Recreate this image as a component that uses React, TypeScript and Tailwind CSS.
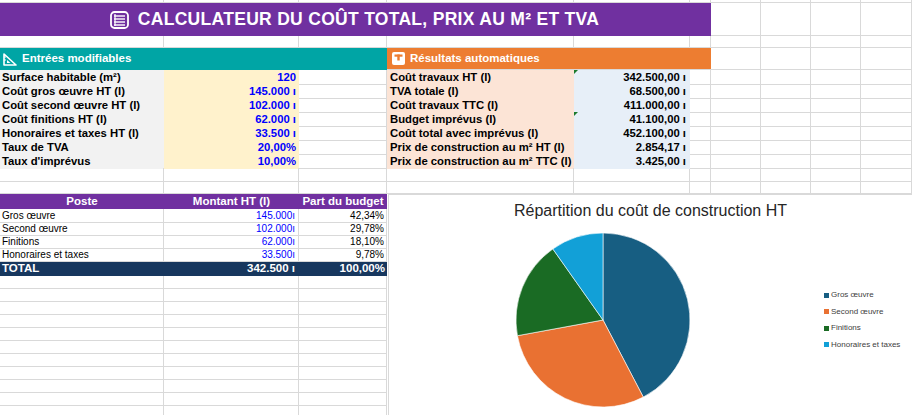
import React from "react";

const COLS =
  "grid grid-cols-[164px_135px_88px_187px_116px_21px_50px_50px_50px_51px]";
const CELL = "border-r border-b border-[#d9d9d9]";

const inputs = [
  ["Surface habitable (m²)", "120"],
  ["Coût gros œuvre HT (I)", "145.000 ı"],
  ["Coût second œuvre HT (I)", "102.000 ı"],
  ["Coût finitions HT (I)", "62.000 ı"],
  ["Honoraires et taxes HT (I)", "33.500 ı"],
  ["Taux de TVA", "20,00%"],
  ["Taux d'imprévus", "10,00%"],
];

const results = [
  ["Coût travaux HT (I)", "342.500,00 ı", true],
  ["TVA totale (I)", "68.500,00 ı", false],
  ["Coût travaux TTC (I)", "411.000,00 ı", false],
  ["Budget imprévus (I)", "41.100,00 ı", true],
  ["Coût total avec imprévus (I)", "452.100,00 ı", false],
  ["Prix de construction au m² HT (I)", "2.854,17 ı", false],
  ["Prix de construction au m² TTC (I)", "3.425,00 ı", false],
];

const postes = [
  { name: "Gros œuvre", value: 145000, label: "145.000ı", pct: "42,34%", color: "#175e82" },
  { name: "Second œuvre", value: 102000, label: "102.000ı", pct: "29,78%", color: "#e97132" },
  { name: "Finitions", value: 62000, label: "62.000ı", pct: "18,10%", color: "#1a6b24" },
  { name: "Honoraires et taxes", value: 33500, label: "33.500ı", pct: "9,78%", color: "#12a0d7" },
];

const EmptyCells = ({ n }: { n: number }) => (
  <>
    {Array.from({ length: n }).map((_, i) => (
      <div key={i} className={CELL} />
    ))}
  </>
);

const LedgerIcon = () => (
  <svg width="19" height="18" viewBox="0 0 19 18">
    <rect x="1" y="1" width="17" height="16" rx="3.5" fill="none" stroke="white" strokeWidth="1.8" />
    <line x1="5" y1="3" x2="5" y2="15" stroke="white" strokeWidth="1.2" />
    <line x1="4" y1="5" x2="15" y2="5" stroke="white" strokeWidth="1.4" />
    <line x1="4" y1="8" x2="15" y2="8" stroke="white" strokeWidth="1.4" />
    <line x1="4" y1="11" x2="15" y2="11" stroke="white" strokeWidth="1.4" />
    <line x1="4" y1="14" x2="15" y2="14" stroke="white" strokeWidth="1.4" />
  </svg>
);

const RulerIcon = () => (
  <svg width="14" height="13" viewBox="0 0 14 13">
    <path d="M1 1 L13 12 L1 12 Z" fill="none" stroke="white" strokeWidth="1.6" strokeLinejoin="round" />
    <path d="M4 7 L7.5 10 L4 10 Z" fill="white" />
    <line x1="1" y1="4" x2="3" y2="4" stroke="white" strokeWidth="1" />
    <line x1="1" y1="7" x2="3" y2="7" stroke="white" strokeWidth="1" />
  </svg>
);

const BoxIcon = () => (
  <svg width="13" height="13" viewBox="0 0 13 13">
    <rect x="0" y="0" width="13" height="13" rx="2" fill="white" />
    <rect x="2.5" y="2.5" width="8" height="2.2" fill="#ed7d31" />
    <rect x="5.3" y="2.5" width="2.4" height="6" fill="#ed7d31" />
  </svg>
);

const Pie = () => {
  const r = 87;
  const c = 88;
  const total = postes.reduce((s, p) => s + p.value, 0);
  let acc = 0;
  return (
    <svg width="176" height="176" viewBox="0 0 176 176">
      {postes.map((p) => {
        const a0 = (acc / total) * Math.PI * 2;
        acc += p.value;
        const a1 = (acc / total) * Math.PI * 2;
        const x0 = c + r * Math.sin(a0);
        const y0 = c - r * Math.cos(a0);
        const x1 = c + r * Math.sin(a1);
        const y1 = c - r * Math.cos(a1);
        const large = a1 - a0 > Math.PI ? 1 : 0;
        return (
          <path
            key={p.name}
            d={`M${c} ${c} L${x0} ${y0} A${r} ${r} 0 ${large} 1 ${x1} ${y1} Z`}
            fill={p.color}
            stroke="white"
            strokeWidth="0.6"
          />
        );
      })}
    </svg>
  );
};

const App = () => {
  return (
    <div className="h-[415px] w-[912px] overflow-hidden bg-white font-['Liberation_Sans',Arial,sans-serif] text-black">
      {/* top strip */}
      <div className={`${COLS} h-[3px]`}>
        <EmptyCells n={10} />
      </div>

      {/* title */}
      <div className={`${COLS} h-[33px]`}>
        <div className="col-span-6 flex items-center justify-center gap-[9px] bg-[#7030a0] pr-[2px]">
          <LedgerIcon />
          <span className="text-[17.5px] font-bold tracking-[0.3px] text-white">
            CALCULATEUR DU COÛT TOTAL, PRIX AU M² ET TVA
          </span>
        </div>
        <EmptyCells n={4} />
      </div>

      <div className={`${COLS} h-[12px]`}>
        <EmptyCells n={10} />
      </div>

      {/* section headers */}
      <div className={`${COLS} h-[22px]`}>
        <div className="col-span-3 flex items-center gap-[5px] bg-[#00a5a5] pl-[3px] text-[11.5px] font-bold text-white">
          <RulerIcon />
          <span>Entrées modifiables</span>
        </div>
        <div className="col-span-3 flex items-center gap-[5px] border-b border-[#d9d9d9] bg-[#ed7d31] pl-[5px] text-[11.5px] font-bold text-white">
          <BoxIcon />
          <span>Résultats automatiques</span>
        </div>
        <EmptyCells n={4} />
      </div>

      {/* data rows */}
      {inputs.map(([label, value], i) => {
        const [rLabel, rValue, mark] = results[i];
        return (
          <div key={label} className={`${COLS} h-[14px] text-[11.3px] font-bold leading-[15px]`}>
            <div className="whitespace-nowrap bg-[#f2f2f2] pl-[2px]">{label}</div>
            <div className="bg-[#fff2cc] pr-[3px] text-right text-[#0000ff]">{value}</div>
            <div className={CELL} />
            <div className="overflow-hidden whitespace-nowrap bg-[#fce4d6] pl-[3px]">{rLabel as string}</div>
            <div className="relative bg-[#e7eff8] pr-[4px] text-right">
              {mark && (
                <div className="absolute left-0 top-0 h-0 w-0 border-r-[4px] border-t-[4px] border-r-transparent border-t-[#1c7a2c]" />
              )}
              {rValue as string}
            </div>
            <EmptyCells n={5} />
          </div>
        );
      })}

      <div className={`${COLS} h-[14px]`}>
        <EmptyCells n={10} />
      </div>
      <div className={`${COLS} h-[12px]`}>
        <EmptyCells n={10} />
      </div>

      {/* bottom: table + chart */}
      <div className="flex">
        <div className="w-[387px] shrink-0">
          <div className="grid h-[15px] grid-cols-[164px_135px_88px] bg-[#7030a0] text-[11.5px] font-bold leading-[15px] text-white">
            <div className="text-center">Poste</div>
            <div className="text-center">Montant HT (I)</div>
            <div className="text-center">Part du budget</div>
          </div>
          {postes.map((p) => (
            <div key={p.name} className="grid h-[13px] grid-cols-[164px_135px_88px] text-[10px] leading-[13px]">
              <div className={`${CELL} pl-[2px]`}>{p.name}</div>
              <div className={`${CELL} pr-[3px] text-right text-[#0000ff]`}>{p.label}</div>
              <div className={`${CELL} pr-[2px] text-right`}>{p.pct}</div>
            </div>
          ))}
          <div className="grid h-[15px] grid-cols-[164px_135px_88px] bg-[#17375e] text-[11.5px] font-bold leading-[15px] text-white">
            <div className="pl-[2px]">TOTAL</div>
            <div className="pr-[4px] text-right">342.500 ı</div>
            <div className="pr-[2px] text-right">100,00%</div>
          </div>
          {Array.from({ length: 11 }).map((_, i) => (
            <div key={i} className="grid h-[13px] grid-cols-[164px_135px_88px]">
              <div className={CELL} />
              <div className={CELL} />
              <div className={CELL} />
            </div>
          ))}
        </div>

        <div className="ml-[1px] flex h-[221px] flex-1 flex-col border-l border-t border-[#d9d9d9] bg-white">
          <div className="h-[33px] pt-[6px] text-center text-[16px] leading-[20px] text-[#262626]">
            Répartition du coût de construction HT
          </div>
          <div className="flex items-start pl-[126px] pt-[4px]">
            <Pie />
            <div className="ml-[133px] mt-[59px] flex flex-col gap-[8.6px] text-[8px] leading-[8px] text-[#404040]">
              {postes.map((p) => (
                <div key={p.name} className="flex items-center gap-[2px] whitespace-nowrap">
                  <span className="inline-block h-[5px] w-[5px]" style={{ backgroundColor: p.color }} />
                  {p.name}
                </div>
              ))}
            </div>
          </div>
        </div>
      </div>
    </div>
  );
};

export default App;
